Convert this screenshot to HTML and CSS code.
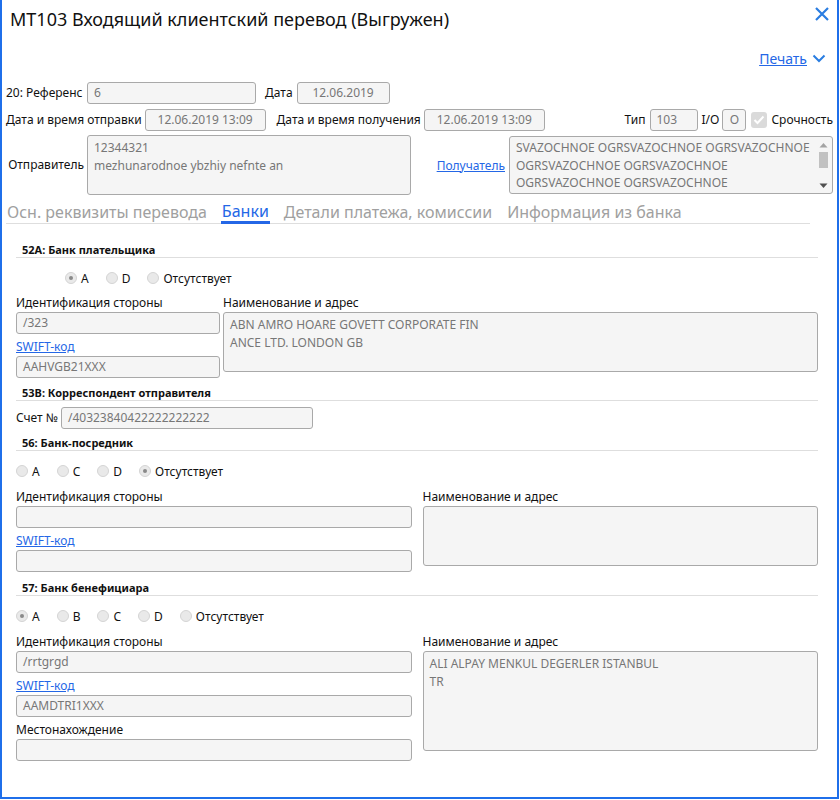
FILE: index.html
```html
<!DOCTYPE html>
<html lang="ru">
<head>
<meta charset="utf-8">
<link rel="stylesheet" href="styles.css">
</head>
<body>
<div class="dialog">
  <div class="titlebar">
    <h1 class="title">MT103 Входящий клиентский перевод (Выгружен)</h1>
    <svg class="close" width="16" height="16" viewBox="0 0 16 16"><path d="M2 2L14 14M14 2L2 14" stroke="#2a7de1" stroke-width="2.2" fill="none"/></svg>
  </div>
  <div class="print-row">
    <a class="link print" href="#">Печать</a>
    <svg class="chev" width="14" height="9" viewBox="0 0 14 9"><path d="M1.5 1.5l5.5 5.5 5.5-5.5" stroke="#2a7de1" stroke-width="2" fill="none"/></svg>
  </div>

  <div class="row r1">
    <span class="lbl w-ref">20: Референс</span>
    <div class="field f-ref">6</div>
    <span class="lbl l-date">Дата</span>
    <div class="field center f-date">12.06.2019</div>
  </div>

  <div class="row r2">
    <span class="lbl l-send">Дата и время отправки</span>
    <div class="field center f-dt">12.06.2019 13:09</div>
    <span class="lbl l-recv">Дата и время получения</span>
    <div class="field center f-dt">12.06.2019 13:09</div>
    <div class="right-group">
      <span class="lbl">Тип</span>
      <div class="field f-type">103</div>
      <span class="lbl l-io">I/O</span>
      <div class="field center f-io">O</div>
      <span class="check"><svg width="12" height="10" viewBox="0 0 12 10"><path d="M1.5 5l3 3 6-6.5" stroke="#fff" stroke-width="2" fill="none"/></svg></span>
      <span class="lbl">Срочность</span>
    </div>
  </div>

  <div class="row r3">
    <span class="lbl w-ref right">Отправитель</span>
    <div class="area f-sender">12344321<br>mezhunarodnoe ybzhiy nefnte an</div>
    <div class="right-group">
      <a class="link l-rcpt" href="#">Получатель</a>
      <div class="area f-rcpt">
        <div class="rcpt-text">SVAZOCHNOE OGRSVAZOCHNOE OGRSVAZOCHNOE<br>OGRSVAZOCHNOE OGRSVAZOCHNOE<br>OGRSVAZOCHNOE OGRSVAZOCHNOE</div>
        <div class="sbar">
          <svg width="9" height="6" viewBox="0 0 9 6"><path d="M0.5 5.5L4.5 1 8.5 5.5z" fill="#a3a3a3"/></svg>
          <div class="thumb"></div>
          <div class="sb-space"></div>
          <svg width="9" height="6" viewBox="0 0 9 6"><path d="M0.5 0.5L4.5 5 8.5 0.5z" fill="#505050"/></svg>
        </div>
      </div>
    </div>
  </div>

  <div class="tabs">
    <span class="tab">Осн. реквизиты перевода</span>
    <span class="tab active">Банки</span>
    <span class="tab">Детали платежа, комиссии</span>
    <span class="tab">Информация из банка</span>
  </div>

  <div class="banks">
    <div class="sec-head first">52A: Банк плательщика</div>
    <div class="radios indent">
      <span class="radio on"></span><span class="rl">A</span>
      <span class="radio"></span><span class="rl">D</span>
      <span class="radio"></span><span class="rl">Отсутствует</span>
    </div>
    <div class="cols c52">
      <div class="col">
        <div class="flbl">Идентификация стороны</div>
        <div class="field">/323</div>
        <a class="flbl link" href="#">SWIFT-код</a>
        <div class="field">AAHVGB21XXX</div>
      </div>
      <div class="col">
        <div class="flbl">Наименование и адрес</div>
        <div class="area h60">ABN AMRO HOARE GOVETT CORPORATE FIN<br>ANCE LTD. LONDON GB</div>
      </div>
    </div>

    <div class="sec-head">53B: Корреспондент отправителя</div>
    <div class="row acct">
      <span class="lbl">Счет №</span>
      <div class="field f-acct">/40323840422222222222</div>
    </div>

    <div class="sec-head s56">56: Банк-посредник</div>
    <div class="radios">
      <span class="radio"></span><span class="rl">A</span>
      <span class="radio"></span><span class="rl">C</span>
      <span class="radio"></span><span class="rl">D</span>
      <span class="radio on"></span><span class="rl">Отсутствует</span>
    </div>
    <div class="cols">
      <div class="col">
        <div class="flbl">Идентификация стороны</div>
        <div class="field"></div>
        <a class="flbl link" href="#">SWIFT-код</a>
        <div class="field"></div>
      </div>
      <div class="col">
        <div class="flbl">Наименование и адрес</div>
        <div class="area h60"></div>
      </div>
    </div>

    <div class="sec-head s57">57: Банк бенефициара</div>
    <div class="radios">
      <span class="radio on"></span><span class="rl">A</span>
      <span class="radio"></span><span class="rl">B</span>
      <span class="radio"></span><span class="rl">C</span>
      <span class="radio"></span><span class="rl">D</span>
      <span class="radio"></span><span class="rl">Отсутствует</span>
    </div>
    <div class="cols">
      <div class="col">
        <div class="flbl">Идентификация стороны</div>
        <div class="field">/rrtgrgd</div>
        <a class="flbl link" href="#">SWIFT-код</a>
        <div class="field">AAMDTRI1XXX</div>
        <div class="flbl">Местонахождение</div>
        <div class="field"></div>
      </div>
      <div class="col">
        <div class="flbl">Наименование и адрес</div>
        <div class="area h100">ALI ALPAY MENKUL DEGERLER ISTANBUL<br>TR</div>
      </div>
    </div>
  </div>
</div>
</body>
</html>
```

FILE: styles.css
```css
* { box-sizing: border-box; }
html, body { margin: 0; padding: 0; background: #fff; }
body {
  font-family: "Noto Sans", "DejaVu Sans", sans-serif;
  font-size: 12px;
  color: #111;
}
.dialog {
  width: 839px;
  height: 799px;
  border: 2px solid #1f6fea;
  border-top: none;
  padding: 0 4px 0 4px;
  overflow: hidden;
}
.titlebar {
  display: flex;
  align-items: flex-start;
  justify-content: space-between;
  height: 40px;
}
.title {
  margin: 7px 0 0 4px;
  font-size: 18px;
  font-weight: normal;
  line-height: 24px;
  color: #111;
}
.close { margin: 6px 3px 0 0; }
.print-row {
  display: flex;
  justify-content: flex-end;
  align-items: center;
  height: 20px;
  margin-top: 8px;
  padding-right: 7px;
}
.link { color: #2467e6; text-decoration: underline; }
.print { font-size: 14px; margin-right: 5px; }
.chev { margin-top: 1px; }

.row { display: flex; align-items: center; }
.r1 { margin-top: 14px; }
.r2 { margin-top: 5px; }
.r3 { margin-top: 4px; align-items: center; }
.lbl { white-space: nowrap; line-height: 16px; }
.w-ref { width: 78px; margin-right: 3px; }
.right { text-align: right; }
.field {
  height: 22px;
  border: 1px solid #a9a9a9;
  border-radius: 3px;
  background: #f5f5f5;
  color: #777;
  padding: 0 6px;
  line-height: 20px;
  white-space: nowrap;
  overflow: hidden;
}
.center { text-align: center; }
.f-ref { width: 169px; }
.l-date { margin: 0 4px 0 9px; }
.f-date { width: 93px; }
.l-send { margin-right: 3px; }
.f-dt { width: 121px; }
.l-recv { margin: 0 3px 0 11px; }
.right-group { margin-left: auto; display: flex; align-items: center; }
.f-type { width: 48px; margin: 0 4px 0 4px; }
.f-io { width: 24px; margin-left: 3px; padding: 0; }
.check {
  width: 16px; height: 16px;
  background: #dadada;
  border-radius: 3px;
  display: inline-flex; align-items: center; justify-content: center;
  margin: 0 4px 0 5px;
}
.area {
  border: 1px solid #a9a9a9;
  border-radius: 3px;
  background: #f5f5f5;
  color: #777;
  padding: 3px 6px;
  line-height: 18px;
}
.f-sender { width: 324px; height: 60px; }
.l-rcpt { margin-right: 4px; }
.f-rcpt {
  width: 324px; height: 58px;
  display: flex;
  padding: 2px 2px 2px 6px;
  line-height: 17.5px;
  overflow: hidden;
}
.rcpt-text { flex: 1; white-space: nowrap; overflow: hidden; }
.sbar {
  width: 13px;
  display: flex; flex-direction: column; align-items: center;
  padding: 3px 0 2px;
}
.thumb { width: 9px; height: 16px; background: #c1c1c1; margin-top: 4px; }
.sb-space { flex: 1; }

.tabs {
  display: flex;
  align-items: flex-end;
  margin-top: 5px;
  width: 804px;
  border-bottom: 1px solid #dedede;
  height: 24px;
}
.tab {
  font-size: 16px;
  color: #a0a0a0;
  line-height: 21px;
  margin-right: 13px;
  padding: 0 1px;
  white-space: nowrap;
}
.tab.active {
  color: #2467e6;
  border-bottom: 3px solid #2467e6;
  margin-bottom: -1px;
  line-height: 19px;
}

.banks { padding: 0 15px 0 10px; }
.sec-head {
  font-size: 11px;
  font-weight: bold;
  line-height: 14px;
  padding-left: 6px;
  border-bottom: 1px solid #dedede;
  margin-top: 8px;
  color: #111;
}
.sec-head.first { margin-top: 19px; }
.sec-head.s56 { margin-top: 7px; }
.sec-head.s57 { margin-top: 9px; }
.radios {
  display: flex;
  align-items: center;
  height: 18px;
  margin-top: 11px;
}
.radios.indent { padding-left: 49px; }
.radio {
  width: 12px; height: 12px;
  border-radius: 50%;
  border: 1px solid #d4d4d4;
  background: #e9e9e9;
  position: relative;
  margin-right: 4px;
}
.radio.on::after {
  content: "";
  position: absolute;
  left: 3px; top: 3px;
  width: 4px; height: 4px;
  border-radius: 50%;
  background: #8a8a8a;
}
.rl { margin-right: 17px; }
.cols {
  display: grid;
  grid-template-columns: 1fr 1fr;
  column-gap: 11px;
  margin-top: 9px;
}
.cols.c52 { grid-template-columns: 204px 1fr; column-gap: 3px; margin-top: 8px; }
.col { display: flex; flex-direction: column; }
.flbl { line-height: 16px; margin-bottom: 1px; align-self: flex-start; }
.col .field + .flbl { margin-top: 5px; }
.h60 { height: 60px; }
.h100 { height: 100px; }
.acct { margin-top: 6px; }
.acct .lbl { margin-right: 3px; }
.f-acct { width: 252px; }
```
